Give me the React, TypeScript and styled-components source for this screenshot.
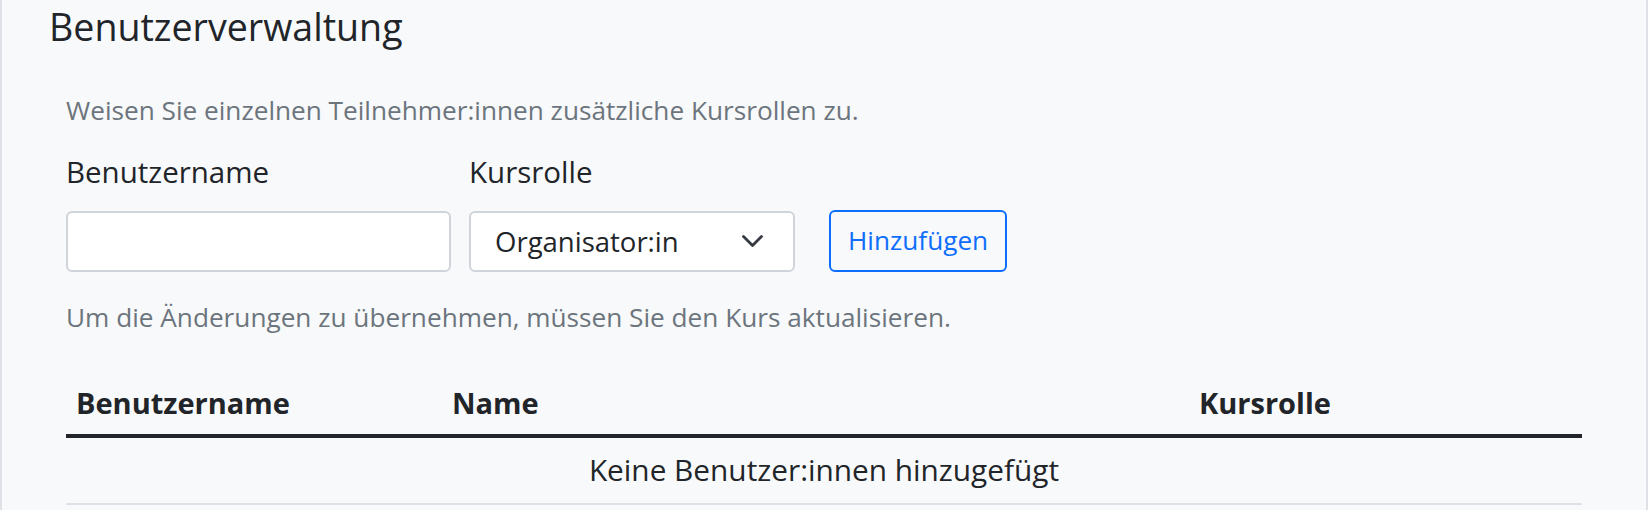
import React from "react";
import styled, { createGlobalStyle } from "styled-components";

const GlobalStyle = createGlobalStyle`
  html, body {
    margin: 0;
    padding: 0;
    background: #ffffff;
  }
  body {
    font-family: "Open Sans", "Noto Sans", "DejaVu Sans", sans-serif;
    color: #212529;
  }
  * {
    box-sizing: border-box;
  }
`;

const Card = styled.section`
  min-height: 510px;
  background: #f8f9fa;
  border-left: 2px solid #dee2e6;
  border-right: 2px solid #dee2e6;
`;

const Header = styled.div`
  padding: 4px 46px 0 47px;
`;

const Title = styled.h3`
  margin: 0;
  font-size: 37.6px;
  font-weight: 400;
  line-height: 1.225;
`;

const Body = styled.div`
  padding: 41px 64px 0 64px;
`;

const Hint = styled.p<{ $gap?: number }>`
  margin: 0;
  margin-top: ${(p) => p.$gap ?? 0}px;
  font-size: 26.2px;
  line-height: 1.49;
  color: #6c757d;
`;

const FormRow = styled.div`
  display: flex;
  align-items: flex-end;
  margin-top: 19.5px;
`;

const Field = styled.div<{ $width: number; $gap?: number }>`
  display: flex;
  flex-direction: column;
  width: ${(p) => p.$width}px;
  margin-right: ${(p) => p.$gap ?? 0}px;
`;

const Label = styled.label`
  font-size: 29.5px;
  line-height: 1.5;
  margin-bottom: 17px;
`;

const TextInput = styled.input`
  height: 61px;
  width: 100%;
  border: 2px solid #ced4da;
  border-radius: 6px;
  background: #ffffff;
  font: inherit;
  font-size: 29.5px;
  padding: 0 24px;
  outline: none;
`;

const SelectBox = styled.div`
  height: 61px;
  display: flex;
  align-items: center;
  justify-content: space-between;
  border: 2px solid #ced4da;
  border-radius: 6px;
  background: #ffffff;
  padding: 0 30px 0 24px;
  font-size: 27.5px;
  line-height: 1.5;
`;

const Chevron = () => (
  <svg width="21" height="13" viewBox="0 0 21 13" fill="none">
    <polyline
      points="1.5,1.5 10.5,10.5 19.5,1.5"
      stroke="#343a40"
      strokeWidth="2.8"
      strokeLinecap="round"
      strokeLinejoin="round"
    />
  </svg>
);

const OutlineButton = styled.button`
  height: 62px;
  padding: 0 17px;
  border: 2px solid #0d6efd;
  border-radius: 6px;
  background: transparent;
  color: #0d6efd;
  font: inherit;
  font-size: 26.2px;
  line-height: 1.5;
  cursor: pointer;
`;

const Table = styled.table`
  width: 100%;
  margin-top: 35px;
  border-collapse: collapse;
  table-layout: fixed;
`;

const HeadCell = styled.th<{ $width?: number }>`
  width: ${(p) => (p.$width ? `${p.$width}px` : "auto")};
  text-align: left;
  font-size: 29px;
  font-weight: 700;
  line-height: 1.5;
  padding: 9.5px 10px 9.5px 10px;
  border-bottom: 4px solid #212529;
`;

const EmptyCell = styled.td`
  text-align: center;
  font-size: 29.8px;
  line-height: 1.5;
  padding: 10px 10px 10px 10px;
  border-bottom: 2px solid #dee2e6;
`;

export default function App() {
  return (
    <>
      <GlobalStyle />
      <Card>
        <Header>
          <Title>Benutzerverwaltung</Title>
        </Header>
        <Body>
          <Hint>Weisen Sie einzelnen Teilnehmer:innen zusätzliche Kursrollen zu.</Hint>
          <FormRow>
            <Field $width={385} $gap={18}>
              <Label>Benutzername</Label>
              <TextInput type="text" />
            </Field>
            <Field $width={326} $gap={34}>
              <Label>Kursrolle</Label>
              <SelectBox>
                <span>Organisator:in</span>
                <Chevron />
              </SelectBox>
            </Field>
            <OutlineButton type="button">Hinzufügen</OutlineButton>
          </FormRow>
          <Hint $gap={26}>Um die Änderungen zu übernehmen, müssen Sie den Kurs aktualisieren.</Hint>
          <Table>
            <thead>
              <tr>
                <HeadCell $width={376}>Benutzername</HeadCell>
                <HeadCell $width={747}>Name</HeadCell>
                <HeadCell>Kursrolle</HeadCell>
              </tr>
            </thead>
            <tbody>
              <tr>
                <EmptyCell colSpan={3}>Keine Benutzer:innen hinzugefügt</EmptyCell>
              </tr>
            </tbody>
          </Table>
        </Body>
      </Card>
    </>
  );
}
